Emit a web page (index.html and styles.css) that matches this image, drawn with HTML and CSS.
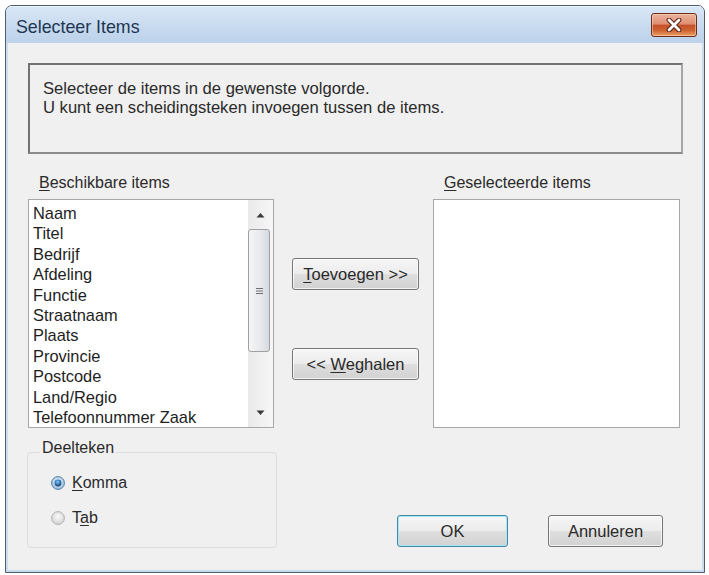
FILE: index.html
```html
<!DOCTYPE html>
<html lang="nl">
<head>
<meta charset="utf-8">
<title>Selecteer Items</title>
<link rel="stylesheet" href="styles.css">
</head>
<body>
<div class="window">
  <div class="titlebar">
    <span class="title">Selecteer Items</span>
    <div class="close">
      <svg width="20" height="14" viewBox="0 0 20 14">
        <path d="M5 2 L15 12 M15 2 L5 12" stroke="#5a2414" stroke-width="4.8" stroke-linecap="round" fill="none"/>
        <path d="M5 2 L15 12 M15 2 L5 12" stroke="#ffffff" stroke-width="2.8" stroke-linecap="round" fill="none"/>
      </svg>
    </div>
  </div>
  <div class="frame">
    <div class="client">
      <div class="message">
        <p>Selecteer de items in de gewenste volgorde.</p>
        <p>U kunt een scheidingsteken invoegen tussen de items.</p>
      </div>
      <div class="lists">
        <div class="label"><u>B</u>eschikbare items</div>
        <div></div>
        <div class="label"><u>G</u>eselecteerde items</div>
        <div class="listbox">
          <ul class="items">
            <li>Naam</li>
            <li>Titel</li>
            <li>Bedrijf</li>
            <li>Afdeling</li>
            <li>Functie</li>
            <li>Straatnaam</li>
            <li>Plaats</li>
            <li>Provincie</li>
            <li>Postcode</li>
            <li>Land/Regio</li>
            <li>Telefoonnummer Zaak</li>
          </ul>
          <div class="scrollbar">
            <div class="arrow">
              <svg width="9" height="6" viewBox="0 0 9 6"><path d="M0.5 5.5 L4.5 1 L8.5 5.5 Z" fill="#3a3a3a"/></svg>
            </div>
            <div class="thumb">
              <svg width="9" height="8" viewBox="0 0 9 8">
                <path d="M1 1.5 H8 M1 4 H8 M1 6.5 H8" stroke="#6e6e6e" stroke-width="1"/>
              </svg>
            </div>
            <div class="track"></div>
            <div class="arrow">
              <svg width="9" height="6" viewBox="0 0 9 6"><path d="M0.5 0.5 L4.5 5 L8.5 0.5 Z" fill="#3a3a3a"/></svg>
            </div>
          </div>
        </div>
        <div class="movebtns">
          <button class="btn"><u>T</u>oevoegen &gt;&gt;</button>
          <button class="btn">&lt;&lt; <u>W</u>eghalen</button>
        </div>
        <div class="listbox"></div>
      </div>
      <div class="bottom">
        <fieldset class="group">
          <legend>Deelteken</legend>
          <label class="radio">
            <svg width="14" height="14" viewBox="0 0 14 14">
              <defs>
                <radialGradient id="rg1" cx="50%" cy="40%" r="60%">
                  <stop offset="0" stop-color="#eaf2fa"/>
                  <stop offset="1" stop-color="#9dbddc"/>
                </radialGradient>
                <radialGradient id="rg2" cx="45%" cy="35%" r="65%">
                  <stop offset="0" stop-color="#8fd0f6"/>
                  <stop offset="0.5" stop-color="#3b7fc0"/>
                  <stop offset="1" stop-color="#163e6e"/>
                </radialGradient>
              </defs>
              <circle cx="7" cy="7" r="6.4" fill="url(#rg1)" stroke="#4d7ea8" stroke-width="1"/>
              <circle cx="7" cy="7" r="3.4" fill="url(#rg2)"/>
            </svg>
            <span><u>K</u>omma</span>
          </label>
          <label class="radio">
            <svg width="14" height="14" viewBox="0 0 14 14">
              <defs>
                <radialGradient id="rg3" cx="50%" cy="40%" r="60%">
                  <stop offset="0" stop-color="#fafafa"/>
                  <stop offset="1" stop-color="#d2d2d2"/>
                </radialGradient>
              </defs>
              <circle cx="7" cy="7" r="6.4" fill="url(#rg3)" stroke="#b2b2b2" stroke-width="1"/>
            </svg>
            <span>T<u>a</u>b</span>
          </label>
        </fieldset>
        <button class="btn ok">OK</button>
        <button class="btn cancel">Annuleren</button>
      </div>
    </div>
  </div>
</div>
</body>
</html>
```

FILE: styles.css
```css
body {
  margin: 0;
  background: #ffffff;
  font-family: "Liberation Sans", Arial, sans-serif;
}

.window {
  margin: 5px 0 0 5px;
  width: 700px;
  height: 568px;
  box-sizing: border-box;
  border: 1px solid #4f5c6b;
  border-radius: 7px 7px 0 0;
  background: #cbdcee;
  display: flex;
  flex-direction: column;
  overflow: hidden;
}

.titlebar {
  height: 37px;
  flex: none;
  display: flex;
  justify-content: space-between;
  align-items: flex-start;
  padding: 0 7px 0 10px;
  background: linear-gradient(#dae8f6, #c6d9ee 60%, #bcd3eb);
  box-shadow: inset 0 1px 0 #eef5fc;
}

.title {
  padding-top: 11px;
  font-size: 17.8px;
  line-height: 20px;
  color: #1e3652;
}

.close {
  margin-top: 7px;
  width: 46px;
  height: 24px;
  box-sizing: border-box;
  border: 1px solid #6e2c1c;
  border-radius: 3px;
  background: linear-gradient(#ecb39c 0%, #df8f72 45%, #c4512b 52%, #cf6332 75%, #eba064 100%);
  box-shadow: inset 0 0 0 1px rgba(255, 220, 200, 0.5);
  display: flex;
  align-items: center;
  justify-content: center;
}

.frame {
  flex: 1;
  display: flex;
  padding: 0 2px 2px;
}

.client {
  flex: 1;
  background: #f0f0f0;
  padding: 20px 0 0 20px;
  color: #262626;
  font-size: 16px;
}

.message {
  width: 655px;
  height: 91px;
  box-sizing: border-box;
  border: 2px solid;
  border-color: #727272 #a6a6a6 #8c8c8c #727272;
  padding: 14px 13px;
  font-size: 16.6px;
  line-height: 19px;
  color: #2a2a2a;
}

.message p {
  margin: 0;
}

.lists {
  margin-top: 20px;
  display: grid;
  grid-template-columns: 246px 159px 247px;
}

.label {
  padding-left: 11px;
  line-height: 18px;
  margin-bottom: 7px;
  color: #2a2a2a;
}

u {
  text-underline-offset: 2px;
}

.listbox {
  height: 229px;
  box-sizing: border-box;
  border: 1px solid #a8a8a8;
  background: #ffffff;
  display: flex;
}

.items {
  flex: 1;
  list-style: none;
  margin: 0;
  padding: 3px 0 0 4px;
  font-size: 16.4px;
  line-height: 20.4px;
  color: #1e1e1e;
}

.scrollbar {
  width: 25px;
  flex: none;
  display: flex;
  flex-direction: column;
  background: linear-gradient(to right, #eaeaea, #f6f6f6);
}

.arrow {
  height: 29px;
  flex: none;
  display: flex;
  align-items: center;
  justify-content: center;
}

.thumb {
  height: 123px;
  width: 22px;
  flex: none;
  box-sizing: border-box;
  border: 1px solid #a0a0a0;
  border-radius: 3px;
  background: linear-gradient(to right, #f6f6f6, #e6e8ec 60%, #d4dae2);
  display: flex;
  align-items: center;
  justify-content: center;
}

.track {
  flex: 1;
}

.movebtns {
  display: flex;
  flex-direction: column;
  align-items: flex-start;
  padding: 59px 0 0 18px;
  gap: 58px;
}

.btn {
  width: 127px;
  height: 32px;
  box-sizing: border-box;
  padding: 0;
  border: 1px solid #767676;
  border-radius: 3px;
  background: linear-gradient(#f6f6f6 0%, #ececec 48%, #dedede 52%, #d2d2d2 100%);
  box-shadow: inset 0 0 0 1px rgba(255, 255, 255, 0.7);
  font: inherit;
  font-size: 16.5px;
  color: #2a2a2a;
}

.bottom {
  display: flex;
  align-items: flex-end;
  margin-top: 11px;
}

.group {
  margin: 0 0 0 -1px;
  width: 250px;
  box-sizing: border-box;
  border: 1px solid #dcdcdc;
  border-radius: 4px;
  padding: 8px 0 19px 0;
  min-inline-size: 0;
}

.group legend {
  margin-left: 12px;
  padding: 0 2px 8px;
  line-height: 18px;
  color: #2a2a2a;
}

.radio {
  display: flex;
  align-items: center;
  height: 20px;
  margin-left: 23px;
  gap: 7px;
  color: #2a2a2a;
}

.radio + .radio {
  margin-top: 15px;
}

.ok {
  width: 111px;
  margin: 0 0 1px 120px;
  border-color: #3f8aa6;
  box-shadow: inset 0 0 0 1px #a9e6f4;
}

.cancel {
  width: 115px;
  margin: 0 0 1px 40px;
}
```
